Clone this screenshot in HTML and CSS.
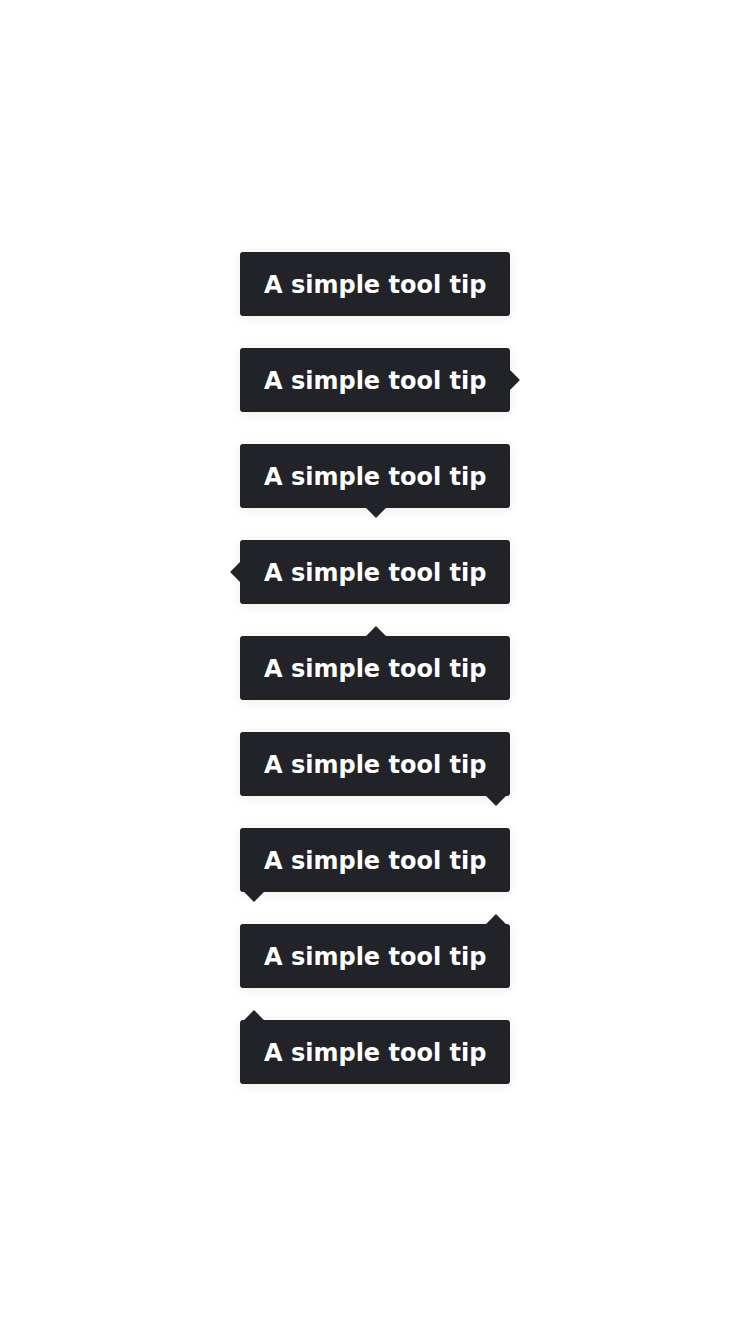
FILE: index.html
```html
<!DOCTYPE html>
<html>
<head>
<meta charset="utf-8">
<link rel="stylesheet" href="styles.css">
</head>
<body>
<div class="stack">
  <div class="tip">A simple tool tip</div>
  <div class="tip arrow right">A simple tool tip</div>
  <div class="tip arrow bottom">A simple tool tip</div>
  <div class="tip arrow left">A simple tool tip</div>
  <div class="tip arrow top">A simple tool tip</div>
  <div class="tip arrow bottom-right">A simple tool tip</div>
  <div class="tip arrow bottom-left">A simple tool tip</div>
  <div class="tip arrow top-right">A simple tool tip</div>
  <div class="tip arrow top-left">A simple tool tip</div>
</div>
</body>
</html>
```
FILE: styles.css
```css
html, body {
  margin: 0;
  padding: 0;
  background: #ffffff;
}
body {
  width: 750px;
  height: 1334px;
  display: flex;
  align-items: center;
  justify-content: center;
  font-family: "DejaVu Sans", sans-serif;
}
.stack {
  display: flex;
  flex-direction: column;
  gap: 32px;
  margin-top: 2px;
}
.tip {
  position: relative;
  width: 270px;
  height: 64px;
  box-sizing: border-box;
  padding: 1px 24px 0;
  display: flex;
  align-items: center;
  background: #212329;
  color: #ffffff;
  font-weight: bold;
  font-size: 24px;
  border-radius: 3px;
  box-shadow: 0 2px 12px rgba(0, 0, 0, 0.08);
  white-space: nowrap;
}
.arrow::after {
  content: "";
  position: absolute;
  width: 14px;
  height: 14px;
  background: #212329;
  transform: rotate(45deg);
}
.right::after { right: -7px; top: 25px; }
.left::after { left: -7px; top: 25px; }
.bottom::after { bottom: -7px; left: 129px; }
.top::after { top: -7px; left: 129px; }
.bottom-right::after { bottom: -7px; right: 7px; }
.bottom-left::after { bottom: -7px; left: 7px; }
.top-right::after { top: -7px; right: 7px; }
.top-left::after { top: -7px; left: 7px; }
```
